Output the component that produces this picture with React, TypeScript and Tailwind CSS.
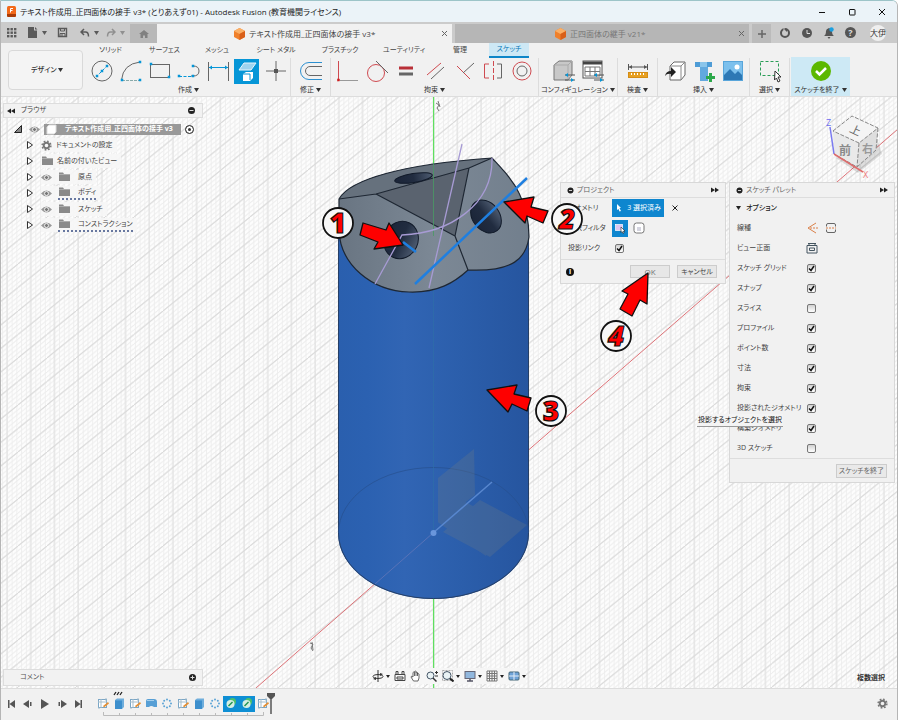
import type { ReactNode } from "react";

const BLUE = "#0696d7";
const RED = "#cf4a50";

function Ico({ children, size = 24, className = "" }: { children: ReactNode; size?: number; className?: string }) {
  return (
    <svg width={size} height={size} viewBox={`0 0 ${size} ${size}`} fill="none" stroke="#666" strokeWidth="1" className={`shrink-0 ${className}`} aria-hidden="true">
      {children}
    </svg>
  );
}

function Caret({ className = "" }: { className?: string }) {
  return (
    <svg width="5" height="4" viewBox="0 0 5 4" className={`shrink-0 ${className}`} aria-hidden="true">
      <path d="M0 0h5L2.500 4z" fill="currentColor" />
    </svg>
  );
}

function Cube({ className = "" }: { className?: string }) {
  return (
    <svg width="11" height="12" viewBox="0 0 11 12" className={`shrink-0 ${className}`} aria-hidden="true">
      <path d="M5.500 0 11 3v6l-5.500 3L0 9V3z" fill="#f0802b" />
      <path d="M5.500 0 11 3 5.500 6 0 3z" fill="#fbb067" />
      <path d="M5.500 6 11 3v6l-5.500 3z" fill="#d9601a" />
    </svg>
  );
}

function Dot({ x, y, c = BLUE }: { x: number; y: number; c?: string }) {
  return <rect x={x - 1} y={y - 1} width="2" height="2" fill={c} stroke={c} strokeWidth="0.500" />;
}

/* ---------- window title and document tabs ---------- */

function TitleBar() {
  return (
    <header className="flex h-[21px] shrink-0 items-center bg-[#ebf3f8] pl-1.5 text-[#222]">
      <svg width="9" height="11" viewBox="0 0 9 11" className="mr-1" aria-hidden="true">
        <rect width="9" height="11" rx="1.500" fill="#f26a1b" />
        <path d="M0 8h9v1.500A1.500 1.500 0 0 1 7.500 11h-6A1.500 1.500 0 0 1 0 9.500z" fill="#a93c08" />
        <path d="M3.500 6.500v-4h2.500M3.500 4.500h2" stroke="#fff" fill="none" />
      </svg>
      <h1 className="text-[8px] whitespace-nowrap">テキスト作成用_正四面体の接手 v3* (とりあえず01) - Autodesk Fusion (教育機関ライセンス)</h1>
      <div className="ml-auto flex">
        <button aria-label="最小化" className="flex w-[30px] justify-center"><Ico size={8}><path d="M1 4.500h6" stroke="#111" /></Ico></button>
        <button aria-label="最大化" className="flex w-[30px] justify-center"><Ico size={8}><rect x="1.500" y="1.500" width="5.500" height="5.500" rx="0.500" stroke="#111" /></Ico></button>
        <button aria-label="閉じる" className="flex w-[30px] justify-center"><Ico size={8}><path d="M1 1l6 6M7 1 1 7" stroke="#111" /></Ico></button>
      </div>
    </header>
  );
}

function DocumentTabs() {
  return (
    <nav className="flex h-[21px] shrink-0 bg-[#cbcbcb] text-[#5c5c5c]" aria-label="ドキュメント">
      <div className="flex w-[129px] shrink-0 items-center text-[#5a5a5a]">
        <button aria-label="データパネル" className="ml-[5px]">
          <Ico size={11}>
            {[1, 4.5, 8].map((y) => [1, 4.5, 8].map((x) => <rect key={`${x}${y}`} x={x} y={y} width="2.400" height="2.400" fill="#5a5a5a" stroke="none" />))}
          </Ico>
        </button>
        <button aria-label="ファイル" className="ml-2.5 flex items-center gap-1">
          <Ico size={11}><path d="M1 0h6v3.500h3V11H1zM8 0l2.500 2.500H8z" fill="#5a5a5a" stroke="none" /></Ico>
          <Caret />
        </button>
        <button aria-label="保存" className="ml-2.5">
          <Ico size={11}><path d="M1.500 1.500h8v8h-8z" stroke="#5a5a5a" strokeWidth="1.400" /><path d="M3.500 1v3h4V1M3 9.500V6.500h5v3M5 7v2.500" stroke="#5a5a5a" /></Ico>
        </button>
        <button aria-label="元に戻す" className="ml-3 flex items-center gap-1">
          <Ico size={10}><path d="M4 1 1 4l3 3M1 4h4.500q3 0 3 4.500" stroke="#5a5a5a" strokeWidth="1.500" /></Ico>
          <Caret />
        </button>
        <button aria-label="やり直し" className="ml-[7px] flex items-center gap-1 text-[#909090]">
          <Ico size={10}><path d="M6 1l3 3-3 3M9 4H4.500q-3 0-3 4.500" stroke="#909090" strokeWidth="1.500" /></Ico>
          <Caret />
        </button>
      </div>
      <button aria-label="ホーム" className="mt-0.5 flex w-[27px] shrink-0 items-center justify-center bg-[#b8b8b8]">
        <Ico size={10}><path d="M5 1 0 5h1.500v4h2.500V6.500h2V9h2.500V5H10z" fill="#808080" stroke="none" /></Ico>
      </button>
      <div className="mt-0.5 flex min-w-0 flex-1 items-center bg-[#f1f1f1] pr-1">
        <span className="flex flex-1 items-center justify-center gap-1 pl-3 text-[8px] whitespace-nowrap text-[#444]"><Cube />テキスト作成用_正四面体の接手 v3*</span>
        <button aria-label="タブを閉じる"><Ico size={7}><path d="M1 1l5 5M6 1 1 6" /></Ico></button>
      </div>
      <div className="mt-0.5 ml-[3px] flex min-w-0 flex-1 items-center bg-[#b6b6b6] pr-1 text-[#777]">
        <span className="flex flex-1 items-center justify-center gap-1 pl-2 text-[8px] whitespace-nowrap"><Cube />正四面体の継手 v21*</span>
        <button aria-label="タブを閉じる"><Ico size={7}><path d="M1 1l5 5M6 1 1 6" /></Ico></button>
      </div>
      <button aria-label="新しいタブ" className="mt-0.5 ml-[3px] flex w-[19px] items-center justify-center bg-[#bbb]"><Ico size={10}><path d="M5 1v8M1 5h8" strokeWidth="1.500" /></Ico></button>
      <div className="flex w-[126px] shrink-0 items-center gap-[10px] pl-2">
        <button aria-label="拡張機能"><Ico size={12}><circle cx="6" cy="6" r="4" strokeWidth="2" stroke="#555" /><path d="M5 0v5M8 3l-3 3" stroke="#cbcbcb" /><path d="m6 3 2-1v3z" fill="#555" stroke="none" /></Ico></button>
        <button aria-label="ジョブ ステータス"><Ico size={12}><circle cx="6" cy="6" r="5" fill="#555" stroke="none" /><path d="M6 3v3.500h3" stroke="#ddd" /></Ico></button>
        <button aria-label="通知"><Ico size={12}><path d="M1 9q2-1 2-5 0-2 3-3 3 1 3 3 0 4 2 5zM4.500 10h3l-1.500 2z" fill="#555" stroke="none" /><circle cx="8.500" cy="2.500" r="2.200" fill="#1a9fe0" stroke="none" /></Ico></button>
        <button aria-label="ヘルプ" className="flex h-[11px] w-[11px] items-center justify-center rounded-full bg-[#555] text-[9px] leading-none font-bold text-[#ddd]">?</button>
        <button className="ml-1 flex h-4 w-4 items-center justify-center rounded-full bg-[#efefef] text-[8px] leading-none whitespace-nowrap text-[#333]">大伊</button>
      </div>
    </nav>
  );
}

/* ---------- ribbon ---------- */

const createIcons: [string, ReactNode][] = [
  ["円", <><circle cx="12" cy="12" r="10" /><path d="M6 18 18 6" stroke={BLUE} strokeDasharray="3 1.500" /><Dot x={7} y={17} /><Dot x={12} y={12} /><Dot x={17} y={7} /></>],
  ["円弧", <><path d="M2.500 21Q4 5 21 3" /><path d="M3 21.500h18" stroke="#8aa" strokeDasharray="3 1" /><Dot x={3} y={21} /><Dot x={21} y={21} /><Dot x={21} y={3} /></>],
  ["長方形", <><rect x="2.500" y="5.500" width="19" height="13" /><Dot x={3} y={5} /><Dot x={21} y={18} /></>],
  ["スロット", <><path d="M16 7q6 0 6 5t-6 5h-2" /><path d="M2 17.500h12" stroke={BLUE} strokeDasharray="3 1.500" /><Dot x={2} y={17} /><Dot x={16} y={17} /><Dot x={16} y={7} /></>],
  ["寸法", <><path d="M2.500 3v19M22.500 3v19" /><path d="M3 8.500h19" stroke={BLUE} /><path d="M3 8.500l3-2v4zM22 8.500l-3-2v4z" fill={BLUE} stroke="none" /></>],
  ["プロジェクト", <><path d="M9 4h12l-5 7H4z" fill="#9fd3ee" stroke="#e6f5fc" /><path d="m8 15 3-2h7v6l-3 3H8z" fill="#fff" stroke="none" /><path d="M8 15h7v6" stroke={BLUE} /></>],
  ["点", <><path d="M12 2v20M2 12h20" /><rect x="10" y="10" width="4" height="4" fill="#555" stroke="none" /></>],
];

const constraintIcons: [string, ReactNode][] = [
  ["水平/垂直", <><path d="M2.500 2v20" stroke={RED} /><path d="M4 21.500h18" stroke="#999" /><Dot x={2.5} y={21} c="#c22" /></>],
  ["接線", <><circle cx="11" cy="14" r="8.500" stroke={RED} /><path d="m11 2 12 12" /></>],
  ["等しい", <><path d="M5 9h14" stroke="#b93038" strokeWidth="3" /><path d="M5 15h14" strokeWidth="3" /></>],
  ["平行", <><path d="M4 16 18 4" stroke={RED} /><path d="M8 20 21 8" /></>],
  ["直交", <><path d="m5 7 13 13" stroke={RED} /><path d="m11 14 11-10" /></>],
  ["対称", <><path d="M8 5H3.500v14H8" stroke={RED} /><path d="M16 5h4.500v14H16" /><path d="M12.500 2v21" stroke={RED} strokeDasharray="5 2" /></>],
  ["同心円", <><circle cx="12" cy="12" r="9" stroke={RED} /><circle cx="12" cy="12" r="5" /></>],
];

const sliders = <><path d="M13 16h10M13 21h10" stroke="#555" /><path d="m13 16 3-2v4zM22 21l-3-2v4z" fill={BLUE} stroke="none" /></>;

const groups: { label: string; width: string; icons: [string, ReactNode][] }[] = [
  { label: "作成", width: "w-[204px]", icons: createIcons },
  { label: "修正", width: "w-10", icons: [["オフセット", <><path d="M23 3.500H10a8.500 8.500 0 0 0 0 17h13" stroke="#2b8fd0" /><path d="M23 7.500H11a4.500 4.500 0 0 0 0 9h12" /></>]] },
  { label: "拘束", width: "w-[208px]", icons: constraintIcons },
  {
    label: "コンフィギュレーション",
    width: "w-[79px]",
    icons: [
      ["モデル設定", <><path d="M2 6 7 2h13v14l-4 5H2z" fill="#c8c8c8" stroke="#777" /><path d="M2 6h14v15M16 6l4-4" stroke="#aaa" />{sliders}</>],
      ["設定テーブル", <><rect x="2" y="2" width="19" height="17" fill="#fff" stroke="#555" /><path d="M2 4h19" stroke="#444" strokeWidth="3" /><path d="M4 8h15v9H4zM4 12.500h15M9 8v9M14 8v9" stroke="#777" />{sliders}</>],
    ],
  },
  { label: "検査", width: "w-10", icons: [["計測", <><rect x="2.500" y="13.500" width="19" height="5" fill="#e8a020" stroke="#d48d15" /><path d="M5.500 14v2m3-2v2m3-2v2m3-2v2m3-2v2" stroke="#fff" /><path d="M2.500 5v6M21.500 5v6M3 8h18" stroke="#555" /><path d="m3 8 3-2v4zM21 8l-3-2v4z" fill="#555" stroke="none" /></>]] },
  {
    label: "挿入",
    width: "w-[92px]",
    icons: [
      ["派生", <><path d="M7 7 11 3h11v13l-4 5H7z" fill="#fff" stroke="#666" /><path d="M7 7h11v14M18 7l4-4" stroke="#888" /><path d="M2 17q1-5 6-5V8l5 5-5 5v-3q-4-1-6 2z" fill="#222" stroke="none" /></>],
      ["部品", <><path d="M3 3h17v5H3z" fill="#4e9cd6" stroke="none" /><path d="M8 8h8v14H8z" fill="#62a9de" stroke="none" /><path d="M8 3h7v5H8z" fill="#8ac5eb" stroke="none" /><path d="M18.500 14v9M14 18.500h9" stroke="#2ba84a" strokeWidth="3" /></>],
      ["キャンバス", <><rect x="2.500" y="2.500" width="19" height="19" fill="#7cc0ed" stroke="#58a5da" /><path d="m3 21v-5l6-6 5 5 3-3 4 4v5z" fill="#2d78b5" stroke="none" /><circle cx="16" cy="8" r="2.500" fill="#fff" stroke="none" /></>],
    ],
  },
  { label: "選択", width: "w-10", icons: [["選択", <><rect x="2.500" y="2.500" width="18" height="14" stroke="#2a9d57" strokeDasharray="3 2" /><path d="m17 12 6 6h-3l2 4-2 1-1.500-4-2 2z" fill="#fff" stroke="#333" /></>]] },
];

const ribbonTabs: [string, string][] = [
  ["ソリッド", "w-[47px]"],
  ["サーフェス", "w-[61px]"],
  ["メッシュ", "w-[44px]"],
  ["シート メタル", "w-[74px]"],
  ["プラスチック", "w-[54px]"],
  ["ユーティリティ", "w-[74px]"],
  ["管理", "w-[38px]"],
];

function Ribbon() {
  return (
    <section className="flex h-[54px] shrink-0 border-b border-[#ddd] bg-[#f1f1f1] text-[#444]" aria-label="ツールバー">
      <div className="relative mt-[7px] ml-[7px] h-10 w-[75px] shrink-0 text-[#333]">
        <select aria-label="ワークスペース" className="h-full w-full appearance-none rounded-sm border border-[#d9d9d9] bg-[#f4f4f4] pl-[22px] text-[7px] font-medium">
          <option>デザイン</option>
        </select>
        <Caret className="pointer-events-none absolute top-[18px] right-[20px]" />
      </div>
      <div className="ml-1 flex min-w-0 flex-col">
        <div className="flex h-[15px] items-center text-[7px] whitespace-nowrap">
          {ribbonTabs.map(([t, w]) => (
            <button key={t} className={`flex shrink-0 justify-center ${w}`}>{t}</button>
          ))}
          <button className="ml-2.5 h-[15px] w-10 border-b-2 border-[#0e86c8] bg-[#cde8f5] text-[#0b78b8]">スケッチ</button>
        </div>
        <div className="flex">
          {groups.map((g) => (
            <div key={g.label} className={`flex h-[38px] shrink-0 flex-col items-center border-r border-[#dcdcdc] ${g.width}`}>
              <div className="flex h-[26px] items-center">
                {g.icons.map(([name, art]) => (
                  <button key={name} aria-label={name} className={`mx-0.5 flex h-[25px] w-[25px] items-center justify-center ${name === "プロジェクト" ? "bg-[#0696d7]" : ""}`}>
                    <Ico>{art}</Ico>
                  </button>
                ))}
              </div>
              <button className="flex items-center gap-0.5 text-[7px] leading-3 whitespace-nowrap text-[#333]">{g.label}<Caret /></button>
            </div>
          ))}
          <button className="mt-[-1px] ml-px flex h-[39px] w-[59px] shrink-0 flex-col items-center bg-[#cde9f5]">
            <span className="flex h-[27px] items-center">
              <Ico size={22}><circle cx="11" cy="11" r="10" fill="#5cb800" stroke="none" /><path d="m6 11 3.500 3.500L16 8" stroke="#fff" strokeWidth="2.500" /></Ico>
            </span>
            <span className="flex items-center gap-0.5 text-[7px] leading-3 whitespace-nowrap text-[#333]">スケッチを終了<Caret /></span>
          </button>
        </div>
      </div>
    </section>
  );
}

/* ---------- model scene ---------- */

const outline =
  "M339 199C350 179 405 164 492 158C503 170 513 180 519 193C526 207 529 222 529 237C526 258 514 272 468 270C455 282 438 293 409 292C372 291 340 265 339 230Z";

function Scene() {
  return (
    <svg className="absolute inset-0 h-full w-full" viewBox="0 97 898 591" preserveAspectRatio="xMidYMid slice" aria-hidden="true">
      <defs>
        <pattern id="minorV" width="4.740" height="24" patternUnits="userSpaceOnUse" x="433.500"><path d="M0 0v24" stroke="#ececec" strokeWidth="1.600" /></pattern>
        <pattern id="minorD" width="5.800" height="4.700" patternUnits="userSpaceOnUse" x="598" y="640"><path d="M-1 5.510 6.800-.810M-3.900 3.160 1.900-1.540M3.900 7.860 9.700 3.160" stroke="#ededed" strokeWidth="1" /></pattern>
        <pattern id="majorV" width="23.700" height="24" patternUnits="userSpaceOnUse" x="432.500"><path d="M1 0v24" stroke="#dedede" /></pattern>
        <pattern id="majorD" width="29" height="23.500" patternUnits="userSpaceOnUse" x="598" y="640"><path d="M-2 25.120 31-1.620" stroke="#dadada" /></pattern>
        <linearGradient id="body">
          <stop offset="0" stopColor="#2a5fae" /><stop offset=".15" stopColor="#2b61b1" /><stop offset=".35" stopColor="#3165b4" /><stop offset=".65" stopColor="#2b5eab" /><stop offset="1" stopColor="#26559f" />
        </linearGradient>
        <linearGradient id="hole"><stop offset="0" stopColor="#1b2538" /><stop offset=".5" stopColor="#212c40" /><stop offset="1" stopColor="#4d5b70" /></linearGradient>
        <linearGradient id="face"><stop offset="0" stopColor="#697582" /><stop offset=".5" stopColor="#7c8895" /><stop offset="1" stopColor="#727f8d" /></linearGradient>
      </defs>
      <rect y="97" width="898" height="591" fill="#fdfdfd" />
      <rect y="97" width="898" height="591" fill="url(#minorV)" />
      <rect y="97" width="898" height="591" fill="url(#minorD)" />
      <rect y="97" width="898" height="591" fill="url(#majorV)" />
      <rect y="97" width="898" height="591" fill="url(#majorD)" />
      <path d="M256 688 433 533 898 129" stroke="#dd7378" fill="none" />
      <rect x="433" y="97" width="1.200" height="591" fill="#5fe05f" />
      <g stroke="#777" fill="none"><path d="m436 103 3 2-2 3 2 3M438 101l2 6M310 643l3 1-2 4 2 3M312 642l1 8" /></g>

      <path d="M338 225V533A95.500 66 0 0 0 529 533V235Z" fill="url(#body)" />
      <path d="M338.500 225V533A95 65.500 0 0 0 528.500 533V235" stroke="#263f66" fill="none" />
      <path d="M338.500 533A95 65.500 0 0 1 528.500 533" stroke="#27508f" fill="none" opacity=".7" />
      <path d="M433.500 290v243" stroke="#2f70a8" opacity=".6" />
      <g fill="#6d7b86" opacity=".28">
        <path d="M438 478 474 449 475 495 438 523Z" />
        <path d="M439 488 486 513V556L439 523Z" />
        <path d="M443 532 480 500 527 525 490 557Z" />
      </g>
      <path d="m375 584 58-51" stroke="#5873b8" />
      <path d="m433 533 59-51" stroke="#5887cf" strokeWidth="1.500" />
      <circle cx="433.500" cy="533" r="3" fill="#6a96dc" />

      <path d={outline} fill="url(#face)" />
      <path d="M339 199C350 179 405 164 492 158L469 168 376 194Z" fill="#66717d" />
      <path d="M376 194 469 168 455 236Z" fill="#5a636f" />
      <g stroke="#1e2733" strokeWidth="1.200" fill="none" strokeLinejoin="round">
        <path d={outline} />
        <path d="M339 199 376 194 469 168 492 158M376 194 455 236 469 168M455 236 468 270" />
      </g>
      <ellipse cx="413.500" cy="178" rx="19" ry="4.500" transform="rotate(-9 413.500 178)" fill="url(#hole)" stroke="#111a29" />
      <ellipse cx="486" cy="216.500" rx="13.500" ry="18" transform="rotate(-38 486 216.500)" fill="url(#hole)" stroke="#111a29" />
      <ellipse cx="401" cy="240" rx="17" ry="19" transform="rotate(25 401 240)" fill="url(#hole)" stroke="#111a29" />
      <path d="M433.500 163V236" stroke="#4a9a64" opacity=".8" />
      <g stroke="#a79bd4" strokeWidth="1.300" fill="none">
        <path d="m375 284 27-49C450 233 493 205 492 158" />
        <path d="m462 144-33 144" />
      </g>
      <path d="M415 284 527 178M403 242l13 10" stroke="#1f7fe0" strokeWidth="2.500" />

      <g>
        <path d="m836 158 22 15 24-19-5-16z" fill="#000" opacity=".12" />
        <path d="m833 131 19-15 26 12-2 22-19 17-23-13z" fill="#e9e9e9" />
        <path d="m833 131 26 12 19-15-26-12z" fill="#f4f4f4" />
        <path d="m859 143 19-15-2 22-19 17z" fill="#dedede" />
        <path d="m833 131 19-15 26 12-19 15zM859 143l-2 24M878 128l-2 22-19 17-23-13" stroke="#888" strokeDasharray="4 1.500" fill="none" />
        <path d="m830 127 4 27" stroke="#7a7af0" strokeWidth="1.500" />
        <path d="m834 154 29 18" stroke="#dd6d6d" strokeWidth="1.500" />
        <text x="826" y="126" fontSize="9" fill="#6c6cf0">Z</text>
        <text x="863" y="178" fontSize="9" fill="#ef7b7b">X</text>
        <text x="850" y="134" fontSize="11" fill="#666" transform="rotate(25 855 130)">上</text>
        <text x="839" y="155" fontSize="12" fontWeight="bold" fill="#8a8a8a">前</text>
        <text x="862" y="153" fontSize="11" fontWeight="bold" fill="#999">右</text>
      </g>
    </svg>
  );
}

function Callouts() {
  const marks: [string, number, number, "normal" | "italic"][] = [["1", 338, 223, "normal"], ["2", 567, 219, "italic"], ["3", 551, 411, "normal"], ["4", 616, 336, "italic"]];
  return (
    <svg className="pointer-events-none absolute inset-0 h-full w-full" viewBox="0 97 898 591" preserveAspectRatio="xMidYMid slice" aria-label="手順番号">
      <g fill="#fe0000" stroke="#111" strokeWidth="1.300" strokeLinejoin="round">
        <path d="M363 223 386 230 389 223 403 245 374 249 378 242 360 235Z" />
        <path d="M504 202 534 197 531 207 548 211 543 223 527 216 525 223Z" />
        <path d="M487 390 517 385 514 394 531 398 527 411 512 404 508 412Z" />
        <path d="M648 273 647 304 640 300 632 316 620 309 628 294 622 291Z" />
      </g>
      {marks.map(([n, x, y, style]) => (
        <g key={n}>
          <circle cx={x} cy={y} r="15" fill="#f7f7f7" stroke="#111" strokeWidth="1.800" />
          <text x={x} y={y + 10} textAnchor="middle" fontSize="28" fontWeight="900" fontStyle={style} fill="#fe0000" stroke="#111" strokeWidth="1.200" fontFamily="'Open Sans', sans-serif">{n}</text>
        </g>
      ))}
    </svg>
  );
}

/* ---------- browser tree ---------- */

const Eye = () => <Ico size={11}><path d="M0 5.500q5.500-6 11 0-5.500 6-11 0z" fill="#999" stroke="none" /><circle cx="5.500" cy="5.500" r="2" fill="#777" stroke="#eee" /></Ico>;
const Folder = () => <Ico size={12}><path d="M1 1.500h4l1 1.500h6V10H1z" fill="#8a8a8a" stroke="none" /><path d="M1 3.500h11" stroke="#bbb" strokeWidth="0.700" /></Ico>;
const Gear = ({ size = 11 }: { size?: number }) => (
  <svg width={size} height={size} viewBox="0 0 12 12" fill="none" stroke="#777" aria-hidden="true">
    <circle cx="6" cy="6" r="3" strokeWidth="2" />
    <circle cx="6" cy="6" r="4.800" strokeWidth="1.600" strokeDasharray="1.900 1.870" />
  </svg>
);
const Expander = () => (
  <button aria-label="展開" className="shrink-0"><Ico size={8}><path d="M1.500.500 6.500 4 1.500 7.500z" fill="#fff" stroke="#333" /></Ico></button>
);

const tree: { label: string; icon: "gear" | "views" | "item"; marked?: boolean }[] = [
  { label: "ドキュメントの設定", icon: "gear" },
  { label: "名前の付いたビュー", icon: "views" },
  { label: "原点", icon: "item" },
  { label: "ボディ", icon: "item", marked: true },
  { label: "スケッチ", icon: "item" },
  { label: "コンストラクション", icon: "item", marked: true },
];

function BrowserPanel() {
  return (
    <aside className="w-[200px] text-[7px] text-[#444]">
      <div className="flex h-[15px] items-center border border-[#ddd] bg-[#f2f2f2] px-[3px]">
        <Ico size={8}><path d="M4 1.500v5L0 4zM8 1.500v5L4 4z" fill="#222" stroke="none" /></Ico>
        <span className="ml-1.5">ブラウザ</span>
        <button aria-label="折りたたむ" className="ml-auto mr-1"><Ico size={7}><circle cx="3.500" cy="3.500" r="3.500" fill="#222" stroke="none" /><path d="M1.500 3.500h4" stroke="#ddd" /></Ico></button>
      </div>
      <ul className="mt-[3px]">
        <li className="flex h-4 items-center gap-1 pl-[11px]">
          <button aria-label="折りたたむ" className="mr-[3px]"><Ico size={8}><path d="M7.500.500v7h-7z" fill="#888" stroke="#222" /></Ico></button>
          <Eye />
          <span className="flex h-[11px] w-[137px] items-center gap-2 bg-[#999] pl-0.5 font-bold whitespace-nowrap text-white">
            <Ico size={11}><path d="M1 3 3 1h7v7l-2 2H1z" fill="#fff" stroke="#ddd" /></Ico>テキスト作成用_正四面体の接手 v3
          </span>
          <input type="radio" defaultChecked aria-label="アクティブにする" className="h-[9px] w-[9px] shrink-0 appearance-none rounded-full border border-[#444] bg-[#333] ring-2 ring-inset ring-white" />
        </li>
        {tree.map((n) => (
          <li key={n.label} className="flex h-4 items-center gap-[7px] pl-[23px]">
            <Expander />
            <span className="flex h-[14px] items-center bg-[#f6f6f6]/90 pr-1">
              {n.icon === "gear" && <Gear />}
              {n.icon === "views" && <Folder />}
              {n.icon === "item" && <Eye />}
              <span className={`flex h-[14px] items-center ${n.marked ? "border-b-2 border-dotted border-[#6878a0]" : ""} ${n.icon === "item" ? "ml-1.5" : "ml-1"}`}>
                {n.icon === "item" && <Folder />}
                <span className={`whitespace-nowrap ${n.icon === "item" ? "ml-2" : ""}`}>{n.label}</span>
              </span>
            </span>
          </li>
        ))}
      </ul>
    </aside>
  );
}

/* ---------- dialogs ---------- */

function Check({ id, on }: { id: string; on: boolean }) {
  return (
    <span className="relative flex h-[9px] w-[9px]">
      <input id={id} type="checkbox" defaultChecked={on} className="peer h-[9px] w-[9px] appearance-none rounded-[2px] border border-[#777] bg-linear-to-b from-[#d0d0d0] to-white" />
      <svg viewBox="0 0 9 9" className="pointer-events-none absolute inset-0 hidden peer-checked:block" fill="none" stroke="#111" strokeWidth="1.500" aria-hidden="true"><path d="m2 4.500 2 2 3-4.500" /></svg>
    </span>
  );
}

function PanelHeader({ title }: { title: string }) {
  return (
    <div className="flex h-[15px] items-center gap-[3px] border-b border-[#ddd] px-1.5 text-[7px] text-[#666]">
      <Ico size={7}><circle cx="3.500" cy="3.500" r="3" fill="#222" stroke="none" /><path d="M2 3.500h3" stroke="#ccc" /></Ico>
      <h2 className="whitespace-nowrap">{title}</h2>
      <button aria-label="ドッキング" className="ml-auto"><Ico size={8}><path d="M0 1.500v5L4 4zM4 1.500v5L8 4z" fill="#222" stroke="none" /></Ico></button>
    </div>
  );
}

function ProjectDialog() {
  return (
    <section className="w-[166px] border border-[#d8d8d8] bg-[#f1f1f1] text-[7px] text-[#444]">
      <PanelHeader title="プロジェクト" />
      <div className="flex h-5 items-center pl-[7px]">
        <span className="w-11 whitespace-nowrap">ジオメトリ</span>
        <button className="flex h-[18px] w-[52px] items-center justify-center gap-1 bg-[#0e86cf] whitespace-nowrap text-white">
          <Ico size={8}><path d="m2 0 4 4H4.500L6 7 4.500 7.500 3.500 5 2 6z" fill="#fff" stroke="none" /></Ico>3 選択済み
        </button>
        <button aria-label="選択を解除" className="ml-2"><Ico size={6}><path d="m.500.500 5 5M5.500.500l-5 5" stroke="#222" /></Ico></button>
      </div>
      <div className="flex h-5 items-center pl-[7px]">
        <span className="w-11 whitespace-nowrap">選択フィルタ</span>
        <button aria-label="指定したエンティティ" className="flex h-[17px] w-4 items-center justify-center bg-[#0e86cf]"><Ico size={12}><rect x="1.500" y="2.500" width="7" height="6" fill="#dcc6f2" stroke="#fff" strokeWidth=".700" /><path d="m7 5 4 4H9.500l.500 2-1 .500-1-2-1 1z" fill="#fff" stroke="#222" strokeWidth=".600" /></Ico></button>
        <button aria-label="ボディ" className="ml-[5px]"><Ico size={12}><rect x="1" y="1" width="10" height="10" rx="2.500" fill="#fff" stroke="#777" /><path d="M4 5h4v4H4z" fill="#d5d5e0" stroke="none" /></Ico></button>
      </div>
      <div className="flex h-5 items-center pl-[7px]">
        <label htmlFor="link" className="w-[47px] whitespace-nowrap">投影リンク</label>
        <Check id="link" on />
      </div>
      <footer className="mt-px flex h-6 items-center gap-[7px] border-t border-[#ddd] pr-2 pl-[5px]">
        <button aria-label="情報" className="mr-auto flex h-2 w-2 items-center justify-center rounded-full bg-[#111] text-[7px] leading-none font-bold text-white">i</button>
        <button className="h-[13px] w-10 border border-[#ccc] bg-[#e7e7e7] text-[8px] leading-none text-[#777]">OK</button>
        <button className="h-[13px] w-10 border border-[#ccc] bg-[#e7e7e7] leading-none whitespace-nowrap">キャンセル</button>
      </footer>
    </section>
  );
}

const options: [string, boolean][] = [
  ["スケッチ グリッド", true],
  ["スナップ", true],
  ["スライス", false],
  ["プロファイル", true],
  ["ポイント数", true],
  ["寸法", true],
  ["拘束", true],
  ["投影されたジオメトリ", true],
  ["構築ジオメトリ", true],
  ["3D スケッチ", false],
];

function SketchPalette() {
  return (
    <section className="w-[166px] border border-[#d8d8d8] bg-[#f1f1f1] text-[7px] text-[#444]">
      <PanelHeader title="スケッチ パレット" />
      <button className="flex h-5 items-center gap-[5px] pl-[6px] font-medium text-[#222]"><Caret />オプション</button>
      <div className="flex h-5 items-center pl-[7px]">
        <span className="w-[69px]">線種</span>
        <button aria-label="構築線"><Ico size={12}><path d="M10 1 2 6l8 5" stroke="#d97f48" /><path d="M4 6h8" stroke="#d97f48" strokeDasharray="2 1" /></Ico></button>
        <button aria-label="中心線" className="ml-2"><Ico size={10}><path d="M0 5h10" strokeDasharray="2 1" stroke="#d97f48" /><path d="M.500 3.500V2q0-1.500 1.500-1.500h6q1.500 0 1.500 1.500v1.500M.500 6.500V8q0 1.500 1.500 1.500h6q1.500 0 1.500-1.500V6.500" /></Ico></button>
      </div>
      <div className="flex h-5 items-center pl-[7px]">
        <span className="w-[69px]">ビュー正面</span>
        <button aria-label="ビュー正面"><Ico size={12}><path d="M1 3.500h10v7.500H1zM3.500 6h5v2.500h-5zM3 3V1.500M9 3V1.500M2 1.500h8" stroke="#445560" /></Ico></button>
      </div>
      {options.map(([label, on], i) => (
        <div key={label} className="flex h-5 items-center pl-[7px]">
          <label htmlFor={`opt${i}`} className="w-[70px] whitespace-nowrap">{label}</label>
          <Check id={`opt${i}`} on={on} />
        </div>
      ))}
      <footer className="flex h-6 items-center justify-end border-t border-[#ddd] pr-[7px]">
        <button className="h-[14px] w-[51px] border border-[#ccc] bg-[#e9e9e9] leading-none whitespace-nowrap text-[#666]">スケッチを終了</button>
      </footer>
    </section>
  );
}

/* ---------- view controls ---------- */

const viewTools: [string, ReactNode, boolean][] = [
  ["オービット", <><path d="M6 0v12" stroke="#333" /><ellipse cx="6" cy="6.500" rx="5" ry="2" stroke="#333" /><path d="m1 9 3-2v3zM11 4 8 3v3z" fill="#333" stroke="none" /></>, true],
  ["ビュー正面", <path d="M1 4.500h10v6H1zM3 7h6v2H3zM2 4V1.500h2V4M8 4V1.500h2V4" stroke="#444" />, false],
  ["画面移動", <path d="M3.500 11 1 7q0-1.500 2 0V2.500q.800-1 1.500 0V1.500q.800-1 1.500 0v1q.800-1 1.500 0v1.500q1-.800 1.500 0V8L8 11zM4.500 2.500V6M6 2v4M7.500 3v3" stroke="#444" fill="#fff" strokeWidth=".800" />, false],
  ["ズーム", <><circle cx="4.500" cy="5.500" r="3.500" fill="#eaf3f5" stroke="#456" /><path d="m7 8 3.500 3.500" stroke="#333" strokeWidth="1.500" /><path d="M9 2.500h3M10.500 1v3M9 6h3" stroke="#333" /></>, false],
  ["フィット", <><rect x=".500" y=".500" width="10" height="10" stroke="#aaa" strokeDasharray="2 1" /><circle cx="5" cy="5.500" r="4" fill="#eaf3f5" stroke="#456" /><path d="m8 8.500 3.500 3" stroke="#222" strokeWidth="2" /></>, true],
  ["表示設定", <><rect x="1" y="1.500" width="10" height="7" fill="#91b7dd" stroke="#667" /><path d="M3 11h6M6 9v2" stroke="#556" strokeWidth="1.500" /></>, true],
  ["グリッド", <path d="M1 1h10v10H1zM3.500 1v10M6 1v10M8.500 1v10M1 3.500h10M1 6h10M1 8.500h10" stroke="#777" />, true],
  ["ビューポート", <><rect x="1" y="2" width="10" height="8" rx="1" fill="#6fa3d8" stroke="#467" /><path d="M6 2v8M1 6h10" stroke="#e5eef8" /></>, true],
];

function BottomOverlay() {
  return (
    <div className="relative flex items-end justify-between pr-3 pl-[2px]">
      <div className="flex h-[17px] w-[200px] items-center justify-between border border-[#ddd] bg-[#f2f2f2] pr-1.5 pl-4 text-[7px] text-[#555]">
        コメント
        <button aria-label="コメントを追加"><Ico size={7}><circle cx="3.500" cy="3.500" r="3.500" fill="#222" stroke="none" /><path d="M1.500 3.500h4M3.500 1.500v4" stroke="#ddd" /></Ico></button>
      </div>
      <div className="absolute bottom-[2px] left-1/2 flex h-4 w-[154px] -translate-x-1/2 items-center justify-between bg-[#f6f6f6] text-[#222]">
        {viewTools.map(([name, art, menu]) => (
          <button key={name} aria-label={name} className="flex items-center gap-0.5"><Ico size={12}>{art}</Ico>{menu && <svg width="4" height="3" viewBox="0 0 4 3" aria-hidden="true"><path d="M0 0h4L2 3z" fill="#222" /></svg>}</button>
        ))}
      </div>
      <p className="text-[7px] leading-4 font-bold text-[#333]">複数選択</p>
    </div>
  );
}

/* ---------- timeline ---------- */

const sketchArt = <><rect x="1.500" y="2.500" width="8" height="8" stroke="#7aa6c6" fill="#fff" /><path d="M4 2v9M1 5h9M1 11h2M9 1v3" stroke="#a5bdcc" /><path d="m6 9 5-4 1 1.500-5 4z" fill="#e59035" stroke="none" /></>;
const extrudeArt = <><path d="m2 3 2-1.500h7V10l-2 2H2z" fill="#6faedc" stroke="none" /><path d="M2 3.500h7V12H2z" fill="#3d8fcd" stroke="none" /></>;
const patternArt = <>{[0, 1, 2, 3, 4, 5, 6, 7].map((i) => <circle key={i} cx={6 + 4 * Math.cos((i * Math.PI) / 4)} cy={6.5 + 4 * Math.sin((i * Math.PI) / 4)} r="1" fill="#5ea4d6" stroke="none" />)}</>;
const bodyArt = <><path d="M1 4q0-2 2-2h6q3 0 3 3v5H9q-3-2-5 0H1z" fill="#579fd5" stroke="none" /><path d="M2 3.500h7" stroke="#a5d0ed" /></>;
const joinArt = <><circle cx="7.500" cy="4.500" r="3.500" fill="#4cc06c" stroke="none" /><circle cx="5.500" cy="7" r="4" fill="#d5efe3" stroke="none" /><path d="m3.500 9 4-4" stroke="#1d9350" strokeWidth="1.500" /></>;

const timeline: [string, ReactNode, boolean][] = [
  ["スケッチ1", sketchArt, false], ["押し出し1", extrudeArt, false], ["スケッチ2", sketchArt, false], ["ボディ1", bodyArt, false], ["パターン1", patternArt, false],
  ["スケッチ3", sketchArt, false], ["押し出し2", extrudeArt, false], ["パターン2", patternArt, false], ["結合1", joinArt, true], ["結合2", joinArt, true], ["スケッチ4", sketchArt, false],
];

const playback: [string, string][] = [
  ["先頭へ", "M2 1h1.500v8H2zM9 1v8L3.500 5z"],
  ["前へ", "M6 1v8L0 5zM7 3h1.500v4H7z"],
  ["再生", "M1 0v10l8-5z"],
  ["次へ", "M4 1v8l6-4zM1.500 3H3v4H1.500z"],
  ["末尾へ", "M6.500 1H8v8H6.500zM1 1v8l5.500-4z"],
];

function Timeline() {
  return (
    <footer className="flex h-8 shrink-0 items-center border-t border-[#ddd] bg-[#f1f1f1] pr-[9px] pb-0.5 pl-[5px]">
      <div className="flex gap-[7px]">
        {playback.map(([name, d]) => (
          <button key={name} aria-label={name}><Ico size={10}><path d={d} fill="#555" stroke="none" /></Ico></button>
        ))}
      </div>
      <div className="relative ml-[11px] flex">
        {timeline.map(([name, art, on]) => (
          <button key={name} aria-label={name} className={`flex h-4 w-4 items-center justify-center ${on ? "bg-[#0e8fd4]" : ""}`}><Ico size={13}>{art}</Ico></button>
        ))}
        <svg className="pointer-events-none absolute top-[-5px] left-0" width="182" height="26" viewBox="0 0 182 26" fill="none" aria-hidden="true">
          <path d="M8.500 21v3.500h160V21M24.500 22v2M40.500 22v2M56.500 22v2M72.500 22v2M88.500 22v2M104.500 22v2M120.500 22v2M136.500 22v2M152.500 22v2" stroke="#bbb" />
          <path d="m19 4 2-3m1 3 2-3m1 3 2-3" stroke="#222" strokeWidth="1.300" />
          <path d="M172 2h8v3l-3 3h-2l-3-3z" fill="#555" /><path d="M176 5v18" stroke="#555" strokeWidth="1.500" />
        </svg>
      </div>
      <button aria-label="設定" className="ml-auto"><Gear /></button>
    </footer>
  );
}

export default function App() {
  return (
    <div lang="ja" className="flex min-h-screen flex-col overflow-hidden rounded-tr-md border-t border-r border-l border-t-[#9cc4c8] border-r-[#b5b5b5] border-l-[#b5b5b5] bg-[#f1f1f1] font-['Open_Sans','Noto_Sans_CJK_JP',sans-serif] [font-feature-settings:'palt']">
      <TitleBar />
      <DocumentTabs />
      <Ribbon />
      <main className="relative flex flex-1 flex-col justify-between pt-[6px] pb-[2px]">
        <Scene />
        <div className="relative pl-[2px]"><BrowserPanel /></div>
        <BottomOverlay />
        <div className="absolute top-[85px] right-[2px] flex items-start gap-[3px]">
          <ProjectDialog />
          <SketchPalette />
        </div>
        <div role="tooltip" className="absolute top-[317px] right-[114px] border-b border-[#999] bg-[#f4f4f4] px-px text-[7px] leading-3 whitespace-nowrap text-[#111]">投影するオブジェクトを選択</div>
        <Callouts />
      </main>
      <Timeline />
    </div>
  );
}
